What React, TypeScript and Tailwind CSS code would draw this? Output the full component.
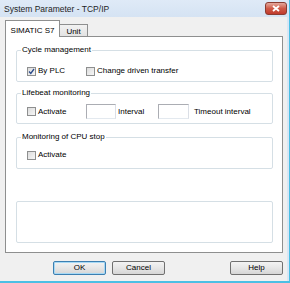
import React from 'react';

function CheckBox({ checked = false }: { checked?: boolean }) {
  return (
    <span className="relative flex h-[9px] w-[9px] shrink-0 items-center justify-center border border-[#8e8f8f] bg-gradient-to-br from-[#dcdcdc] to-[#f6f6f6]">
      {checked && (
        <svg width="7" height="7" viewBox="0 0 7 7" className="absolute">
          <path d="M1 3.5 L2.8 5.5 L6 1" fill="none" stroke="#2a4a8a" strokeWidth="1.3" />
        </svg>
      )}
    </span>
  );
}

function TextBox({ width }: { width: string }) {
  return <span className={`block h-[15px] shrink-0 border border-[#abadb3] border-b-[#e3e9ef] border-r-[#dbdfe6] bg-white ${width}`} />;
}

function Group({ title, className, children }: { title: string; className: string; children?: React.ReactNode }) {
  return (
    <fieldset className={`rounded-[2px] border border-[#d5dfe5] ${className}`}>
      <legend className="ml-[4px] px-[1px] leading-[10px]">{title}</legend>
      {children}
    </fieldset>
  );
}

function DlgButton({ label, isDefault = false }: { label: string; isDefault?: boolean }) {
  return (
    <button
      className={`h-[14px] w-[53px] rounded-[2px] border bg-gradient-to-b from-[#f3f3f3] via-[#e6e6e6] to-[#d6d6d6] leading-[12px] text-black ${
        isDefault ? 'border-[#3c7fb1] shadow-[inset_0_0_0_1px_#a7d9f5]' : 'border-[#707070]'
      }`}
    >
      {label}
    </button>
  );
}

export default function App() {
  return (
    <div className="flex h-[283px] w-[290px] flex-col bg-[#f0f0f0] font-['Liberation_Sans',Arial,sans-serif] text-[8px] text-black">
      <div className="flex flex-1 flex-row">
        <div className="flex flex-1 flex-col">
          {/* Title bar */}
          <div className="flex h-[17px] items-start justify-between bg-gradient-to-b from-[#dfeaf7] to-[#d5e3f3] pl-[4px]">
            <span className="mt-[4px] text-[8.5px] leading-[10px] text-[#1e1e1e]">System Parameter - TCP/IP</span>
            <span className="mt-[2px] flex h-[13px] w-[22px] items-center justify-center rounded-[3px] border border-[#8a3c32] bg-gradient-to-b from-[#e3a89d] via-[#cf5a48] to-[#c0392b]">
              <svg width="8" height="7" viewBox="0 0 8 7">
                <path d="M1 1 L7 6 M7 1 L1 6" stroke="#ffffff" strokeWidth="1.8" />
              </svg>
            </span>
          </div>

          {/* Client */}
          <div className="flex flex-1 flex-col pl-[5px] pr-[4px]">
            {/* Tabs */}
            <div className="mt-[3px] flex h-[16px] items-start">
              <div className="relative z-10 flex h-[17px] w-[55px] items-start justify-center border border-b-0 border-[#8e8f8f] bg-white pt-[5px] leading-[9px]">
                SIMATIC S7
              </div>
              <div className="mt-[4px] flex h-[12px] w-[28px] items-start justify-center border border-b-0 border-l-0 border-[#8e8f8f] bg-gradient-to-b from-[#f2f2f2] to-[#e3e3e3] pt-[2px] leading-[9px]">
                Unit
              </div>
            </div>

            {/* Panel */}
            <div className="flex h-[217px] flex-col border border-[#8e8f8f] bg-white pl-[10px] pr-[9px]">
              <Group title="Cycle management" className="mt-[8px] h-[37px]">
                <div className="flex h-[12px] items-center pl-[10px] pt-0 mt-[10px]">
                  <div className="flex w-[59px] items-center gap-[2px]">
                    <CheckBox checked />
                    <span>By PLC</span>
                  </div>
                  <div className="flex items-center gap-[2px]">
                    <CheckBox />
                    <span>Change driven transfer</span>
                  </div>
                </div>
              </Group>

              <Group title="Lifebeat monitoring" className="mt-[6px] h-[36px]">
                <div className="mt-[6px] flex items-center pl-[10px]">
                  <div className="flex w-[59px] items-center gap-[2px]">
                    <CheckBox />
                    <span>Activate</span>
                  </div>
                  <TextBox width="w-[30px]" />
                  <span className="ml-[2px] w-[40px]">Interval</span>
                  <TextBox width="w-[31px]" />
                  <span className="ml-[5px]">Timeout interval</span>
                </div>
              </Group>

              <Group title="Monitoring of CPU stop" className="mt-[8px] h-[37px]">
                <div className="mt-[7px] flex h-[12px] items-center gap-[2px] pl-[10px]">
                  <CheckBox />
                  <span>Activate</span>
                </div>
              </Group>

              <div className="mt-[32px] h-[42px] rounded-[2px] border border-[#d5dfe5]" />
            </div>

            {/* Buttons */}
            <div className="mt-[8px] flex items-center">
              <div className="ml-[48px] flex gap-[6px]">
                <DlgButton label="OK" isDefault />
                <DlgButton label="Cancel" />
              </div>
              <div className="ml-auto">
                <DlgButton label="Help" />
              </div>
            </div>
          </div>
        </div>
        <div className="w-[3px] border-r border-[#4cbfe4] bg-[#d7e6f5]" />
      </div>
      <div className="h-[2px] bg-[#4cbfe4]" />
    </div>
  );
}
